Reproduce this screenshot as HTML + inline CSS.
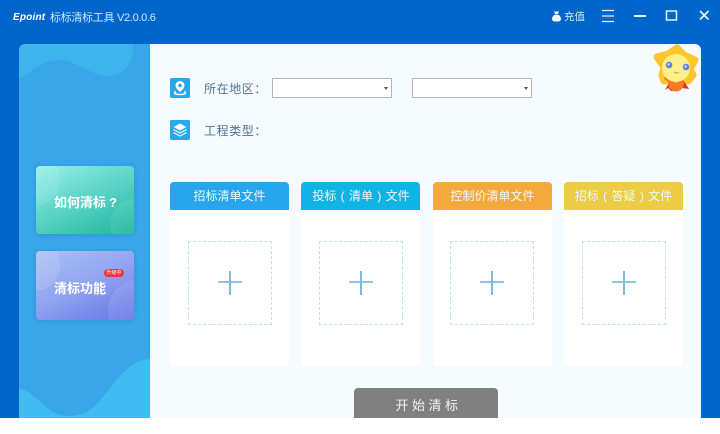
<!DOCTYPE html>
<html><head><meta charset="utf-8"><style>
*{box-sizing:border-box;margin:0;padding:0}
html,body{width:720px;height:434px;overflow:hidden;background:#fff;font-family:"Liberation Sans","Noto Sans CJK SC",sans-serif}
.a{position:absolute}
#win{left:0;top:0;width:720px;height:418px;background:#0066cb;overflow:hidden}
#side{left:19px;top:44px;width:131px;height:374px;background:#38a6e8;border-top-left-radius:6px;overflow:hidden}
#main{left:150px;top:44px;width:551px;height:374px;background:#f5fbff;border-top-right-radius:6px}
.lc{left:36px;width:98px;border-radius:4px;overflow:hidden;color:#fff;font-size:13px;font-weight:700;box-shadow:0 1px 4px rgba(30,110,200,.35)}
.lc span{position:absolute;left:18px;white-space:nowrap}
.lab{color:#55708f;font-size:12px;left:204px;white-space:nowrap;letter-spacing:.6px}
.sel{top:78px;width:120px;height:20px;background:#fff;border:1px solid #b5b5b5}
.sel:after{content:"";position:absolute;right:3px;top:8px;border:2.500px solid transparent;border-top:3px solid #555;border-bottom:0}
.ic{left:170px;width:20px;height:20px;border-radius:2px;background:#28a6ee}
.card{top:182px;width:119px;height:184px;background:#fff;border-radius:4px 4px 3px 3px;overflow:hidden}
.card h4{height:28px;line-height:29px;text-align:center;color:#f0f8ff;font-size:12px;font-weight:400;white-space:nowrap;word-spacing:1px}
.box{position:absolute;left:18px;top:59px;width:84px;height:84px;border:1px dashed #bfe0ee}
.box:before{content:"";position:absolute;left:29px;top:39px;width:24px;height:2px;background:#94c2de}
.box:after{content:"";position:absolute;left:40px;top:29px;width:2px;height:24px;background:#84b8d8}
</style></head><body>
<div id="win" class="a">
<div class="a" style="left:13px;top:12px;color:#fff;font:italic 700 10px 'Liberation Sans',sans-serif;letter-spacing:.2px">Epoint</div>
<div class="a" style="left:50px;top:9px;color:#d4e5f6;font-size:11px;white-space:nowrap;letter-spacing:-.3px">标标清标工具 V2.0.0.6</div>
<svg class="a" style="left:551px;top:11px" width="11" height="11" viewBox="0 0 11 11"><path d="M3 0.500h5L7 3H4z M5.500 3.500C2.500 3.500 1 6 1 8s1.500 2.500 4.500 2.500S10 10 10 8 8.500 3.500 5.500 3.500z" fill="#eef5fc"/></svg>
<div class="a" style="left:564px;top:9px;color:#d4e5f6;font-size:10.500px">充值</div>
<svg class="a" style="left:600px;top:8px" width="120" height="16" viewBox="0 0 120 16" fill="none" stroke="#e6f0fa"><path d="M2 2.500h12M2 8h12M2 13.500h12" stroke-width="1.300"/><path d="M34 8h12" stroke-width="2"/><rect x="66.500" y="3" width="10" height="9" stroke-width="1.500"/><path d="M100 3l8.500 8.500M108.500 3l-8.500 8.500" stroke-width="1.800"/></svg>
<div id="side" class="a">
<svg class="a" style="left:0;top:0" width="131" height="374" viewBox="0 0 131 374"><path d="M0 0H114C116 18 104 33 88 32 70 31 58 16 40 16 24 16 12 28 0 35z" fill="#3fb3ec"/><path d="M0 344C14 348 24 362 34 368 46 374 62 374 76 362 92 346 106 316 131 315V374H0z" fill="#40bcf0"/></svg>
</div>
<div id="main" class="a"></div>
<div class="lc a" style="top:166px;height:68px;background:linear-gradient(155deg,#98f0ea 0%,#5fd6c8 45%,#1db69e 100%)">
<svg class="a" style="left:0;top:0" width="98" height="68"><circle cx="-2" cy="14" r="26" fill="#fff" fill-opacity=".1"/><circle cx="102" cy="60" r="28" fill="#fff" fill-opacity=".08"/></svg><span style="top:26px">如何清标<span style="position:static;margin-left:3px">?</span></span></div>
<div class="lc a" style="top:251px;height:69px;background:linear-gradient(155deg,#aac1f5 0%,#90a4f0 50%,#6473e6 100%)">
<svg class="a" style="left:0;top:0" width="98" height="69"><circle cx="-2" cy="14" r="26" fill="#fff" fill-opacity=".12"/><circle cx="104" cy="60" r="32" fill="#fff" fill-opacity=".1"/></svg><span style="top:27px">清标功能</span>
<div class="a" style="left:68px;top:18px;width:20px;height:8px;border-radius:4px;background:#f0353a;color:#fff;font-size:5px;line-height:8px;text-align:center;font-weight:400">升级中</div></div>
<div class="ic a" style="top:78px"><svg width="20" height="20" viewBox="0 0 20 20" fill="none"><path d="M10 3a4.500 4.500 0 0 1 4.500 4.500C14.500 10 12 12 10 14 8 12 5.500 10 5.500 7.500A4.500 4.500 0 0 1 10 3z" fill="#fff"/><circle cx="10" cy="7.500" r="1.800" fill="#28a6ee"/><path d="M6 13.500C3.500 14.500 4 16.500 10 16.500S16.500 14.500 14 13.500" stroke="#fff" stroke-width="1.500"/></svg></div>
<div class="ic a" style="top:120px"><svg width="20" height="20" viewBox="0 0 20 20"><path d="M10 3.500l6.500 3.500-6.500 3.500L3.500 7z" fill="#fff"/><path d="M3.500 9.500l6.500 3.500 6.500-3.500M3.500 12.500l6.500 3.500 6.500-3.500" fill="none" stroke="#d5f0ff" stroke-width="1.300"/></svg></div>
<div class="lab a" style="top:80px">所在地区：</div>
<div class="lab a" style="top:122px">工程类型：</div>
<div class="sel a" style="left:272px"></div><div class="sel a" style="left:412px"></div>
<svg class="a" style="left:652px;top:43px" width="48" height="52" viewBox="0 0 48 52"><path d="M25 5L32 12 43 17 38 26 41 32 36 38 12 38 10 33 12 24 5 14 16 11z" fill="#fdc62a" stroke="#fdc62a" stroke-width="7" stroke-linejoin="round"/><path d="M13 47l5-9 14 0 5 8-7-1-5 3-6 0-3-3z" fill="#d8362a"/><ellipse cx="24" cy="40" rx="8" ry="8.500" fill="#f97a24"/><path d="M14 32L22 36 18 40 12 36z" fill="#f97a24"/><circle cx="24" cy="38" r="1.800" fill="#fdd835"/><circle cx="24" cy="25" r="14" fill="#fdf08a"/><circle cx="17" cy="22" r="3.300" fill="#5a86e0"/><circle cx="34" cy="24" r="3.300" fill="#5a86e0"/><circle cx="16.500" cy="21.500" r="1.200" fill="#cfe0ff"/><circle cx="33.500" cy="23.500" r="1.200" fill="#cfe0ff"/><path d="M22 29q3 2 5 .500" stroke="#c9832a" fill="none" stroke-width=".8"/></svg>
<div class="card a" style="left:170px"><h4 style="background:#27a6ee">招标清单文件</h4><div class="box"></div></div>
<div class="card a" style="left:301px"><h4 style="background:#10b4e4;padding-left:1px">投标 ( 清单 ) 文件</h4><div class="box"></div></div>
<div class="card a" style="left:433px"><h4 style="background:#f4a93c">控制价清单文件</h4><div class="box" style="left:17px"></div></div>
<div class="card a" style="left:564px"><h4 style="background:#eccb45">招标 ( 答疑 ) 文件</h4><div class="box"></div></div>
<div class="a" style="left:354px;top:388px;width:144px;height:32px;background:#808080;border-radius:4px 4px 0 0;color:#f2f2f2;font-size:13px;text-align:center;line-height:35px;letter-spacing:3.500px;padding-left:5px">开始清标</div>
</div>
</body></html>
